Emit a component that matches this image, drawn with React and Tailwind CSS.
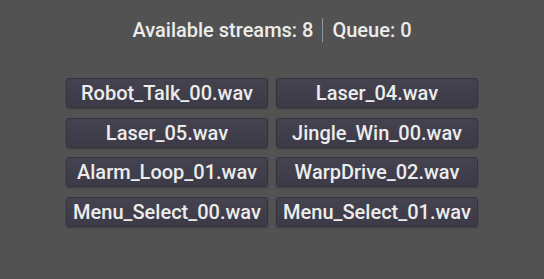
const streams = [
  'Robot_Talk_00.wav',
  'Laser_04.wav',
  'Laser_05.wav',
  'Jingle_Win_00.wav',
  'Alarm_Loop_01.wav',
  'WarpDrive_02.wav',
  'Menu_Select_00.wav',
  'Menu_Select_01.wav',
];

export default function App() {
  return (
    <div
      className="w-[544px] h-[279px] bg-[#525252] flex flex-col items-center text-[#ececec]"
      style={{ fontFamily: 'Roboto, "Noto Sans", sans-serif' }}
    >
      {/* Status line */}
      <div className="mt-[18px] h-[24px] flex items-center text-[20px] font-medium leading-none">
        <span>Available streams: 8</span>
        <span className="mx-[9px] w-px h-[24px] bg-[#8d99a6]" />
        <span>Queue: 0</span>
      </div>

      {/* Stream buttons */}
      <div className="mt-[36px] grid grid-cols-2 gap-x-[8px] gap-y-[9.7px] w-[412px]">
        {streams.map((name) => (
          <button
            key={name}
            className="h-[30px] rounded-[3px] border border-[#34333d] bg-gradient-to-b from-[#45434f] to-[#3c3a47] shadow-[0_1px_2px_rgba(0,0,0,0.25)] text-[20px] font-medium leading-none text-[#ececec]"
          >
            {name}
          </button>
        ))}
      </div>
    </div>
  );
}
